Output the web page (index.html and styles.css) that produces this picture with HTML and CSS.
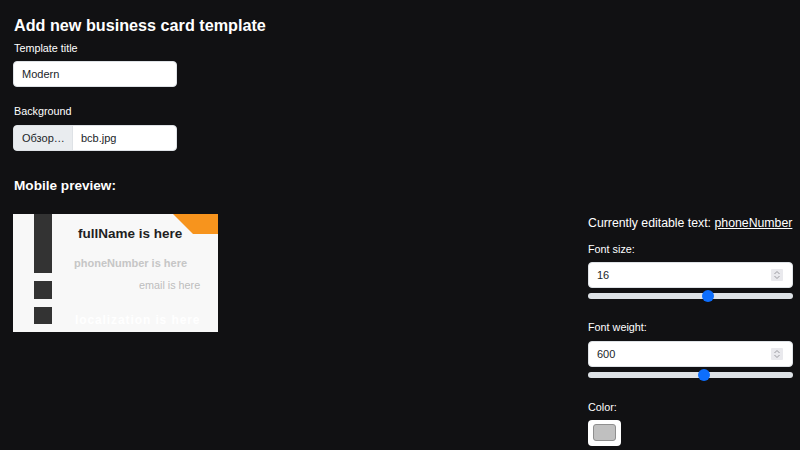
FILE: index.html
```html
<!DOCTYPE html>
<html lang="en">
<head>
<meta charset="utf-8">
<title>Add new business card template</title>
<link rel="stylesheet" href="styles.css">
</head>
<body>
<main class="page">
  <h1 class="title">Add new business card template</h1>

  <label class="label" for="tpl-title">Template title</label>
  <input class="field" id="tpl-title" type="text" value="Modern">

  <label class="label label-bg">Background</label>
  <div class="file-field">
    <span class="file-btn">Обзор…</span>
    <span class="file-name">bcb.jpg</span>
  </div>

  <h2 class="subtitle">Mobile preview:</h2>

  <div class="preview-row">
    <div class="card">
      <span class="bar bar-long"></span>
      <span class="bar bar-sq1"></span>
      <span class="bar bar-sq2"></span>
      <svg class="corner" width="45" height="20" viewBox="0 0 45 20"><polygon points="0,0 45,0 45,20 20,20" fill="#f7941d"/></svg>
      <span class="ct ct-name">fullName is here</span>
      <span class="ct ct-phone">phoneNumber is here</span>
      <span class="ct ct-email">email is here</span>
      <span class="ct ct-loc">localization is here</span>
    </div>

    <aside class="controls">
      <p class="editing">Currently editable text: <u>phoneNumber</u></p>

      <label class="label label-first">Font size:</label>
      <div class="num-field">
        <span class="num-value">16</span>
        <span class="spin"><svg width="8" height="10" viewBox="0 0 8 10"><path d="M1.5 4 L4 1.5 L6.5 4 M1.5 6 L4 8.5 L6.5 6" fill="none" stroke="#9a9aa0" stroke-width="1"/></svg></span>
      </div>
      <input class="range" type="range" min="0" max="27" value="16">

      <label class="label label-next">Font weight:</label>
      <div class="num-field">
        <span class="num-value">600</span>
        <span class="spin"><svg width="8" height="10" viewBox="0 0 8 10"><path d="M1.5 4 L4 1.5 L6.5 4 M1.5 6 L4 8.5 L6.5 6" fill="none" stroke="#9a9aa0" stroke-width="1"/></svg></span>
      </div>
      <input class="range" type="range" min="0" max="1050" value="600">

      <label class="label label-color">Color:</label>
      <div class="swatch"><span class="swatch-fill"></span></div>
    </aside>
  </div>
</main>
</body>
</html>
```

FILE: styles.css
```css
* { box-sizing: border-box; }

html, body {
  margin: 0;
  padding: 0;
  background: #111113;
  color: #ffffff;
  font-family: "Liberation Sans", Arial, sans-serif;
}

.page {
  display: flex;
  flex-direction: column;
  align-items: flex-start;
  padding: 15px 7px 0 13px;
  width: 800px;
  height: 450px;
  overflow: hidden;
}

.title {
  margin: 0 0 6px 1px;
  font-size: 16.2px;
  line-height: 20px;
  font-weight: 700;
}

.label {
  display: block;
  font-size: 10.8px;
  line-height: 14px;
  margin: 0 0 6px 1px;
}

.label-bg { margin-top: 17px; margin-bottom: 7px; }

.field {
  display: block;
  width: 164px;
  height: 26px;
  margin: 0;
  padding: 0 8px;
  border: 1px solid #dee2e6;
  border-radius: 4px;
  background: #ffffff;
  color: #212529;
  font-family: "Liberation Sans", Arial, sans-serif;
  font-size: 11px;
  outline: none;
}

.file-field {
  display: flex;
  width: 164px;
  height: 26px;
  border: 1px solid #dee2e6;
  border-radius: 4px;
  background: #ffffff;
  overflow: hidden;
  font-size: 11px;
  color: #212529;
}

.file-btn {
  display: flex;
  align-items: center;
  width: 59px;
  padding-left: 8px;
  background: #e9ecef;
  border-right: 1px solid #dee2e6;
  white-space: nowrap;
}

.file-name {
  display: flex;
  align-items: center;
  padding-left: 8px;
}

.subtitle {
  margin: 26px 0 19px 1px;
  font-size: 13.6px;
  line-height: 18px;
  font-weight: 700;
}

.preview-row {
  display: flex;
  justify-content: space-between;
  align-items: flex-start;
  width: 100%;
}

.card {
  position: relative;
  width: 205px;
  height: 118px;
  background: #f8f8f8;
  overflow: hidden;
}

.bar {
  position: absolute;
  left: 21px;
  width: 18px;
  background: #333333;
}
.bar-long { top: 0; height: 59px; }
.bar-sq1 { top: 67px; height: 18px; }
.bar-sq2 { top: 93px; height: 17px; }

.corner {
  position: absolute;
  top: 0;
  right: 0;
}

.ct {
  position: absolute;
  line-height: 1.15;
  white-space: nowrap;
}
.ct-name { top: 12px; left: 65px; font-size: 13.5px; font-weight: 700; color: #1f1f1f; }
.ct-phone { top: 43px; left: 61px; font-size: 11px; font-weight: 700; color: #c6c6c6; }
.ct-email { top: 64.5px; left: 126px; font-size: 10.8px; color: #bdbdbd; }
.ct-loc { top: 100px; left: 62px; font-size: 12px; font-weight: 700; letter-spacing: 0.9px; color: #ffffff; }

.controls {
  width: 205px;
  display: flex;
  flex-direction: column;
  padding-top: 0.5px;
}

.editing {
  margin: 0;
  font-size: 12.3px;
  line-height: 16px;
  white-space: nowrap;
}
.editing u { text-underline-offset: 1px; }

.label-first { margin-top: 11.5px; margin-left: 0; }
.label-next { margin-top: 18px; margin-left: 0; margin-bottom: 7px; }
.label-color { margin-top: 19px; margin-left: 0; }

.num-field {
  display: flex;
  align-items: center;
  justify-content: space-between;
  height: 26px;
  padding: 0 9px 0 8px;
  border: 1px solid #dee2e6;
  border-radius: 4px;
  background: #ffffff;
  color: #212529;
  font-size: 11px;
}

.spin {
  display: flex;
  align-items: center;
  justify-content: center;
  width: 12px;
  height: 12px;
  background: #e9e9ed;
  border-radius: 1px;
}

.range {
  -webkit-appearance: none;
  appearance: none;
  display: block;
  width: 205px;
  height: 12px;
  margin: 2px 0 0 0;
  padding: 0;
  background: transparent;
}
.range::-webkit-slider-runnable-track {
  height: 6px;
  background: #dee2e6;
  border-radius: 3px;
}
.range::-webkit-slider-thumb {
  -webkit-appearance: none;
  appearance: none;
  width: 12px;
  height: 12px;
  margin-top: -3px;
  border: none;
  border-radius: 50%;
  background: #0d6efd;
}

.swatch {
  width: 33px;
  height: 26px;
  padding: 4px 5px 5px 5px;
  background: #ffffff;
  border-radius: 4px;
}
.swatch-fill {
  display: block;
  width: 100%;
  height: 100%;
  background: #c0c0c0;
  border: 1px solid #8f8f8f;
  border-radius: 3px;
}
```
